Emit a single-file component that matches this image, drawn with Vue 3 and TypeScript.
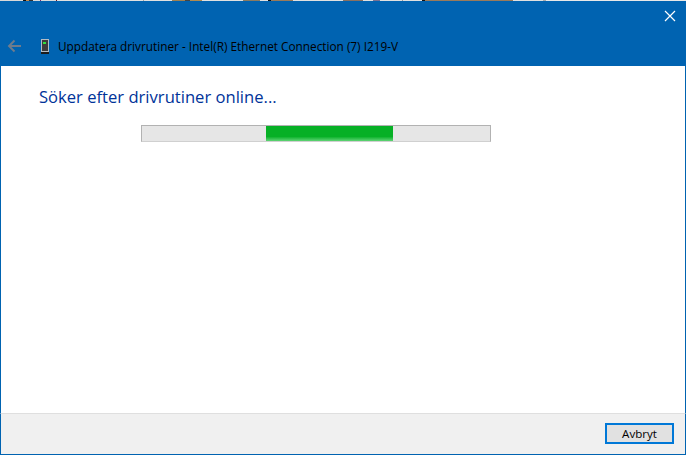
<script setup lang="ts">
const title = 'Uppdatera drivrutiner - Intel(R) Ethernet Connection (7) I219-V'
const heading = 'Söker efter drivrutiner online...'
</script>

<template>
  <div class="window">
    <div class="strip"></div>
    <header class="titlebar">
      <div class="close-row">
        <svg class="close" width="12" height="12" viewBox="0 0 12 12">
          <path d="M1 1 L11 11 M11 1 L1 11" stroke="#fff" stroke-width="1.2" fill="none" />
        </svg>
      </div>
      <div class="title-row">
        <svg class="back" width="16" height="14" viewBox="0 0 16 14">
          <path d="M14 7 H2.5 M7.5 1.5 L2 7 L7.5 12.5" stroke="#6f7c8c" stroke-width="1.9" fill="none" />
        </svg>
        <svg class="device" width="12" height="16" viewBox="0 0 12 16">
          <rect x="1.5" y="1.5" width="7" height="12" fill="#3c3c3c" stroke="#b4bcc4" />
          <rect x="3" y="4" width="3" height="2" fill="#30e040" />
          <rect x="1" y="14" width="8" height="2" fill="#1c1c1c" />
        </svg>
        <span class="title">{{ title }}</span>
      </div>
    </header>
    <main class="content">
      <h1 class="heading">{{ heading }}</h1>
      <div class="progress">
        <div class="fill"></div>
      </div>
    </main>
    <footer class="footer">
      <button class="cancel" type="button">Avbryt</button>
    </footer>
  </div>
</template>

<style>
html, body { margin: 0; padding: 0; background: #fff; }
</style>

<style scoped>
.window {
  width: 686px;
  height: 455px;
  box-sizing: border-box;
  display: flex;
  flex-direction: column;
  font-family: "Open Sans", "Noto Sans", sans-serif;
  overflow: hidden;
}
.strip {
  height: 1px;
  flex: none;
  background: linear-gradient(90deg,
    #d8d8d8 0 23px, #111 23px 26px, #c08a50 26px 29px, #333 29px 33px, #d8d8d8 33px 40px,
    #7a2a6a 40px 41px, #d8d8d8 41px 56px, #6a1a2a 56px 57px, #e0e0e0 57px 143px,
    #a0a0a0 143px 144px, #e0e0e0 144px 172px, #a08050 172px 185px, #444 185px 190px,
    #b08a50 190px 202px, #e0e0e0 202px 243px, #8a7a60 243px 260px, #e0e0e0 260px 268px,
    #111 268px 271px, #9a7a5a 271px 293px, #e0e0e0 293px 343px, #8a7060 343px 363px,
    #e0e0e0 363px 373px, #7a7090 373px 380px, #e0e0e0 380px 402px, #999 402px 403px,
    #e0e0e0 403px 422px, #111 422px 425px, #9a7a5a 425px 513px, #e0e0e0 513px 543px,
    #aaa 543px 546px, #e8e8e8 546px 686px);
}
.titlebar {
  height: 65px;
  flex: none;
  background: #0063b1;
  display: flex;
  flex-direction: column;
}
.close-row {
  height: 30px;
  box-sizing: border-box;
  display: flex;
  justify-content: flex-end;
  align-items: flex-start;
  padding: 9px 10px 0 0;
}
.title-row {
  display: flex;
  align-items: center;
  height: 30px;
}
.back { margin-left: 7px; }
.device { margin-left: 17px; }
.title {
  margin-left: 6px;
  font-size: 11.8px;
  color: #000;
  white-space: nowrap;
}
.content {
  flex: 1;
  background: #fff;
  border-left: 1px solid #0063b1;
  border-right: 1px solid #0063b1;
  padding: 20px 0 0 38px;
}
.heading {
  margin: 0;
  font-size: 16.6px;
  font-weight: 400;
  line-height: 22px;
  color: #003399;
}
.progress {
  margin: 17px 0 0 102px;
  width: 348px;
  height: 15px;
  border: 1px solid #b2b2b2;
  border-bottom-color: #d0d0d0;
  background: #e6e6e6;
  position: relative;
}
.fill {
  position: absolute;
  left: 124px;
  top: 0;
  width: 127px;
  height: 100%;
  background: linear-gradient(#06b025 0 70%, #5fd475 100%);
}
.footer {
  height: 42px;
  flex: none;
  box-sizing: border-box;
  background: #f0f0f0;
  border-top: 1px solid #dfdfdf;
  border-left: 1px solid #0063b1;
  border-right: 1px solid #0063b1;
  border-bottom: 1px solid #0063b1;
  display: flex;
  justify-content: flex-end;
  align-items: flex-start;
  padding: 9px 11px 0 0;
}
.cancel {
  width: 69px;
  height: 21px;
  box-sizing: border-box;
  border: 2px solid #0078d7;
  background: #e1e1e1;
  font-family: inherit;
  font-size: 11.6px;
  color: #000;
  padding: 0;
}
</style>
